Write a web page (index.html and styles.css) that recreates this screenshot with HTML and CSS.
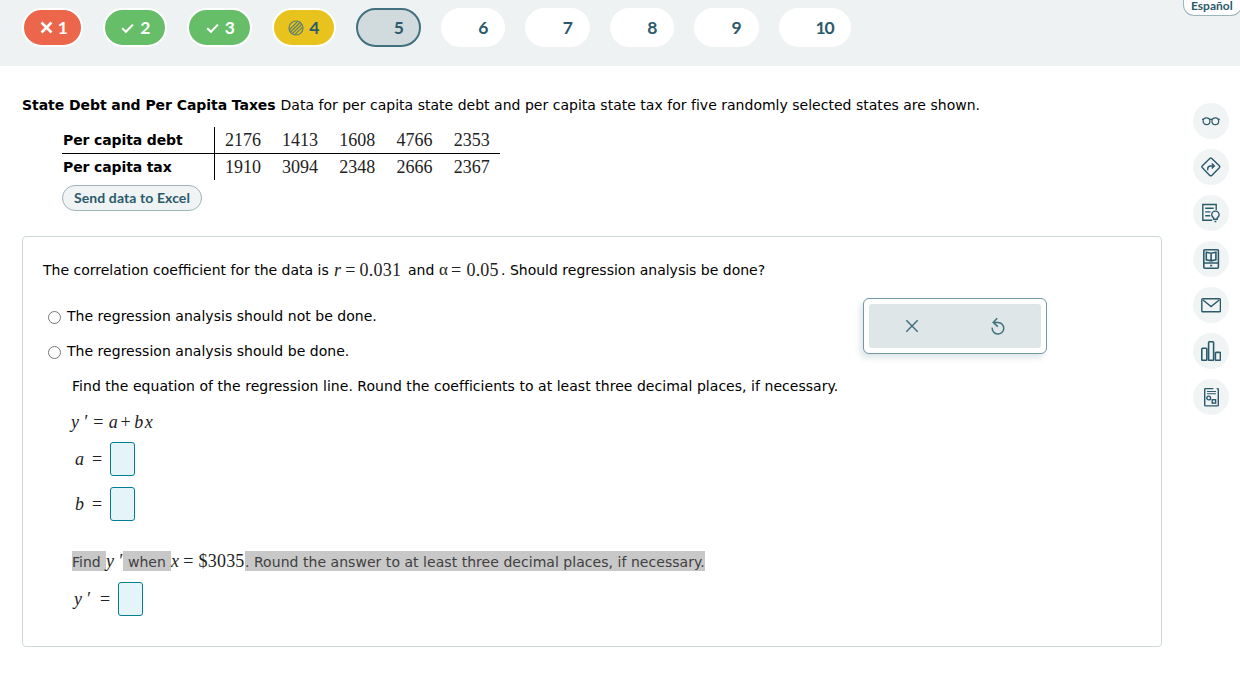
FILE: index.html
```html
<!DOCTYPE html>
<html lang="en">
<head>
    <meta charset="UTF-8">
    <title>Question 5</title>
    <link rel="stylesheet" href="styles.css">
</head>
<body>
    <header class="top-bar">
        <nav class="question-nav">
            <a class="pill pill-wrong"><svg width="13" height="13" viewBox="0 0 13 13"><path d="M1.5 1.5l10 10M11.5 1.5l-10 10" stroke-width="2.6"/></svg>1</a>
            <a class="pill pill-right"><svg width="13" height="12" viewBox="0 0 13 12"><path d="M1.2 6.3l3.7 3.5 7-7.2" stroke-width="2"/></svg>2</a>
            <a class="pill pill-right"><svg width="13" height="12" viewBox="0 0 13 12"><path d="M1.2 6.3l3.7 3.5 7-7.2" stroke-width="2"/></svg>3</a>
            <a class="pill pill-partial"><svg width="16" height="16" viewBox="0 0 16 16"><circle cx="8" cy="8" r="7" stroke-width="1.2"/><path d="M1.6 9.5L9.5 1.6M2 12.5L12.5 2M4 14L14 4M6.8 14.7l7.9-7.9" stroke-width="1.2"/></svg>4</a>
            <a class="pill pill-current">5</a>
            <a class="pill">6</a>
            <a class="pill">7</a>
            <a class="pill">8</a>
            <a class="pill">9</a>
            <a class="pill pill-wide">10</a>
        </nav>
        <a class="language">Español</a>
    </header>

    <div class="page">
        <main class="content">
            <p class="intro"><b>State Debt and Per Capita Taxes</b><span>Data for per capita state debt and per capita state tax for five randomly selected states are shown.</span></p>

            <table class="data-table">
                <tr><th>Per capita debt</th><td>2176</td><td>1413</td><td>1608</td><td>4766</td><td>2353</td></tr>
                <tr><th>Per capita tax</th><td>1910</td><td>3094</td><td>2348</td><td>2666</td><td>2367</td></tr>
            </table>
            <button class="excel-button">Send data to Excel</button>

            <section class="panel">
                <p class="question">
                    <span class="lead">The correlation coefficient for the data is</span>
                    <span class="math value-r"><i>r</i><span class="eq">=</span>0.031</span>
                    <span class="and">and</span>
                    <span class="math value-a"><span class="alpha">α</span><span class="eq">=</span>0.05</span>
                    <span class="tail">. Should regression analysis be done?</span>
                </p>

                <div class="work">
                    <div class="answers">
                        <label class="option"><input type="radio" name="analysis"><span>The regression analysis should not be done.</span></label>
                        <label class="option"><input type="radio" name="analysis"><span>The regression analysis should be done.</span></label>
                        <p class="instruction"><span>Find the equation of the regression line. Round the coefficients to at least three decimal places, if necessary.</span></p>
                        <p class="math formula"><i>y</i><i class="prime">′</i><span class="eq">=</span><i>a</i><span class="plus">+</span><i class="term">bx</i></p>
                        <div class="math field"><i>a</i><span class="eq">=</span><span class="box"></span></div>
                        <div class="math field"><i>b</i><span class="eq">=</span><span class="box"></span></div>
                        <p class="find">
                            <span class="marked find-a">Find</span>
                            <span class="math find-y"><i>y</i><i class="prime">′</i></span>
                            <span class="marked find-b">when</span>
                            <span class="math find-x"><i>x</i><span class="eq">=</span>$3035</span>
                            <span class="marked find-c">. Round the answer to at least three decimal places, if necessary.</span>
                        </p>
                        <div class="math field field-last"><i>y</i><i class="prime">′</i><span class="eq">=</span><span class="box"></span></div>
                    </div>
                    <div class="toolbox">
                        <div class="toolbox-inner">
                            <svg width="14" height="14" viewBox="0 0 14 14"><path d="M1.3 1.3l11.4 11.4M12.7 1.3L1.3 12.7"/></svg>
                            <svg width="16" height="18" viewBox="0 0 16 18"><path d="M2.2 10.6A5.8 5.8 0 1 0 8 5.4H3.4M7.2 1.2L3.2 5.4l4.6 4.2"/></svg>
                        </div>
                    </div>
                </div>
            </section>
        </main>

        <aside class="tools">
            <a class="tool"><svg width="20" height="20" viewBox="0 0 20 20"><g stroke-width="1.2"><circle cx="5.5" cy="10.2" r="3.4"/><circle cx="14.3" cy="10.2" r="3.4"/><path d="M1 8.3h1.4M17.4 8.3h1.4M8.3 8.3h3.2"/></g></svg></a>
            <a class="tool"><svg width="20" height="20" viewBox="0 0 20 20"><path d="M8.8 1.4L1.4 8.8q-1 1 0 2l7.4 7.6q1 .9 2 0l7.5-7.6q.9-1 0-2l-7.5-7.4q-1-.9-2 0z"/><path d="M6.7 13.3V12q0-3 3-3H13M10.8 6.6L13.3 9l-2.5 2.5"/></svg></a>
            <a class="tool"><svg width="20" height="20" viewBox="0 0 20 20"><path d="M15.2 7V1.5H1.8v15.8h9.4M4.2 5.3h8.5M4.2 8.9h5.3M4.2 12.8h5"/><path d="M12.6 16.2v-1.3q-1.9-1.3-1.9-3.1a3.7 3.7 0 0 1 7.4 0q0 1.8-1.9 3.1v1.3zM13.5 18.5h1.8"/></svg></a>
            <a class="tool"><svg width="20" height="20" viewBox="0 0 20 20"><g stroke-width="1.6"><rect x="2.8" y=".8" width="14.6" height="18.4" rx="1"/><path d="M3 14h14M9.2 16.6h2M5.3 3.2l4.8 1 4.8-1v7.7l-4.8 1-4.8-1zM10.1 4.2v7.7"/></g></svg></a>
            <a class="tool"><svg width="20" height="20" viewBox="0 0 20 20"><rect x=".8" y="3.8" width="18.6" height="13" rx="1"/><path d="M2 5l8.1 6.6L18.2 5"/></svg></a>
            <a class="tool"><svg width="20" height="20" viewBox="0 0 20 20"><g stroke-width="1.6"><rect x=".8" y="7.3" width="5" height="12" rx=".8"/><rect x="7.6" y=".8" width="5" height="18.5" rx=".8"/><rect x="14.4" y="11.4" width="5" height="7.9" rx=".8"/></g></svg></a>
            <a class="tool"><svg width="20" height="20" viewBox="0 0 20 20"><path d="M12.4 1.6H4.7q-1 0-1 1v15.3q0 1 1 1h11.6q1 0 1-1V2.6q0-1-1-1h-.6"/><path d="M6 4.5h9M6 6.7h9" stroke-width="1.1"/><circle cx="7.7" cy="11" r="1.9"/><rect x="11.2" y="12.7" width="3.4" height="3.4"/></svg></a>
        </aside>
    </div>
</body>
</html>
```

FILE: styles.css
```css
* {
    margin: 0;
    padding: 0;
    box-sizing: border-box;
}

body {
    width: 1240px;
    height: 693px;
    overflow: hidden;
    background: #fff;
    color: #000;
    font-family: Verdana, "DejaVu Sans", sans-serif;
    font-size: 14px;
    line-height: 20px;
    white-space: nowrap;
}

svg {
    fill: none;
    stroke: currentColor;
    flex-shrink: 0;
}

/* question navigation */
.top-bar {
    display: flex;
    justify-content: space-between;
    align-items: flex-start;
    height: 66px;
    padding-left: 22px;
    background: #eef2f3;
}

.question-nav {
    display: flex;
    gap: 20px;
    padding-top: 8px;
}

.pill {
    display: flex;
    align-items: center;
    justify-content: flex-end;
    gap: 6px;
    width: 64.48px;
    height: 39px;
    padding-right: 15px;
    border: 2px solid #fff;
    border-radius: 20px;
    background: #fff;
    color: #2b5a6b;
    font-family: Lato, sans-serif;
    font-size: 17.5px;
    font-weight: 700;
}

.pill-wrong {
    width: 61px;
    gap: 5px;
    padding-right: 13px;
    background: #eb664a;
    color: #fff;
}

.pill-right {
    background: #66be69;
    color: #fff;
}

.pill-partial {
    gap: 5px;
    background: #e9c31d;
}

.pill-partial svg {
    color: #5c7f6c;
}

.pill-current {
    border-color: #41707f;
    background: #d1dadd;
}

.pill-wide {
    width: 72px;
    letter-spacing: -1px;
}

.language {
    width: 59px;
    height: 16px;
    margin-right: -2px;
    padding-left: 7px;
    border: 1px solid #9db5bb;
    border-top: none;
    border-radius: 0 0 11px 11px;
    background: #fff;
    color: #2b5a6b;
    font-family: Lato, sans-serif;
    font-size: 12px;
    font-weight: 700;
    line-height: 11px;
}

/* page */
.page {
    display: flex;
    justify-content: space-between;
    padding: 29px 11px 0 22px;
}

.content {
    width: 1140px;
}

.intro {
    display: flex;
    gap: 5px;
}

.intro b {
    width: 253.5px;
    letter-spacing: -0.06px;
}

.intro span {
    letter-spacing: 0.015px;
}

.data-table {
    margin: 12px 0 5px 40px;
    border-collapse: collapse;
    table-layout: fixed;
    width: 438px;
}

.data-table th {
    width: 152px;
    height: 27px;
    padding: 1px 0 0 1px;
    border-right: 1px solid #000;
    text-align: left;
    letter-spacing: -0.12px;
}

.data-table td {
    padding-left: 0.5px;
    font-family: "Liberation Serif", serif;
    font-size: 18px;
    text-align: center;
    color: #222;
}

.data-table tr:first-child > * {
    height: 26px;
    border-bottom: 1px solid #000;
}

.excel-button {
    display: block;
    width: 140px;
    height: 26px;
    margin-left: 40px;
    padding-bottom: 1px;
    border: 1px solid #9db5bb;
    border-radius: 13px;
    background: #eff3f4;
    color: #2b5a6b;
    font-family: Lato, sans-serif;
    font-size: 14px;
    font-weight: 700;
    letter-spacing: 0.1px;
}

.panel {
    height: 411px;
    margin-top: 25px;
    padding: 23px 0 0 20px;
    border: 1px solid #cfd9db;
    border-radius: 4px;
}

.math {
    display: flex;
    align-items: center;
    font-family: "Liberation Serif", serif;
    font-size: 18px;
    line-height: 18px;
    color: #222;
    letter-spacing: 0.2px;
}

.question,
.find {
    display: flex;
    height: 20px;
}

.question .math {
    padding-bottom: 1px;
}

.lead { width: 291px; }
.value-r { width: 74px; }
.and { width: 31px; }
.value-a { width: 62px; }

.alpha {
    font-size: 17px;
}

.eq {
    margin: 0 4px;
}

.value-r .eq {
    margin: 0 4px;
}

.value-a .eq {
    margin: 0 5px 0 3px;
}

.work {
    display: flex;
    margin-top: 18px;
}

.answers {
    width: 820px;
}

.option,
.instruction {
    display: flex;
    align-items: center;
    height: 35px;
}

.option span {
    letter-spacing: 0.03px;
}

.option input {
    width: 13px;
    height: 13px;
    margin: 3px 6px 0 5px;
}

.instruction {
    padding-left: 29px;
    letter-spacing: 0.04px;
}

.formula {
    height: 39px;
    padding: 0 0 2px 28px;
}

.prime {
    margin-left: 4px;
}

.formula .eq {
    margin: 0 5px 0 6px;
}

.plus {
    margin: 0 3.5px 0 2.5px;
}

.term {
    letter-spacing: 1.6px;
}

.field {
    height: 34px;
    margin-bottom: 11px;
    padding-left: 32px;
}

.field .eq {
    margin: 0 7.8px 0 8px;
}

.field i {
    width: 9px;
}

.field-last {
    padding-left: 31px;
}

.field-last i {
    width: 8px;
}

.field-last .prime {
    width: 6px;
}

.box {
    width: 25px;
    height: 34px;
    border: 1px solid #007f94;
    border-radius: 3px;
    background: #e5f4f9;
}

.find {
    margin: 30px 0 11px 29px;
}

.marked {
    line-height: 22px;
    background: #c8c8c8;
    color: #404040;
}

.find-a { width: 34px; }
.find-y { width: 17px; }
.find-b { width: 48px; padding-left: 5px; }
.find-x { width: 74px; }
.find-c { width: 460px; letter-spacing: 0.04px; }

.find-x .eq {
    margin: 0 5px 0 4px;
}

/* clear / reset box */
.toolbox {
    width: 184px;
    height: 56px;
    padding: 5px;
    border: 1px solid #7298a4;
    border-radius: 6px;
    background: #fff;
    box-shadow: -3px 4px 6px #dfe6e8;
}

.toolbox-inner {
    display: flex;
    align-items: center;
    justify-content: space-around;
    height: 44px;
    border-radius: 3px;
    background: #dee6e7;
    color: #41707f;
    stroke-width: 1.5;
}

/* right side tools */
.tools {
    display: flex;
    flex-direction: column;
    gap: 10px;
    padding-top: 8px;
}

.tool {
    display: flex;
    align-items: center;
    justify-content: center;
    width: 36px;
    height: 36px;
    border-radius: 50%;
    background: #f0f4f5;
    color: #2b5a6b;
    stroke-width: 1.4;
}
```
